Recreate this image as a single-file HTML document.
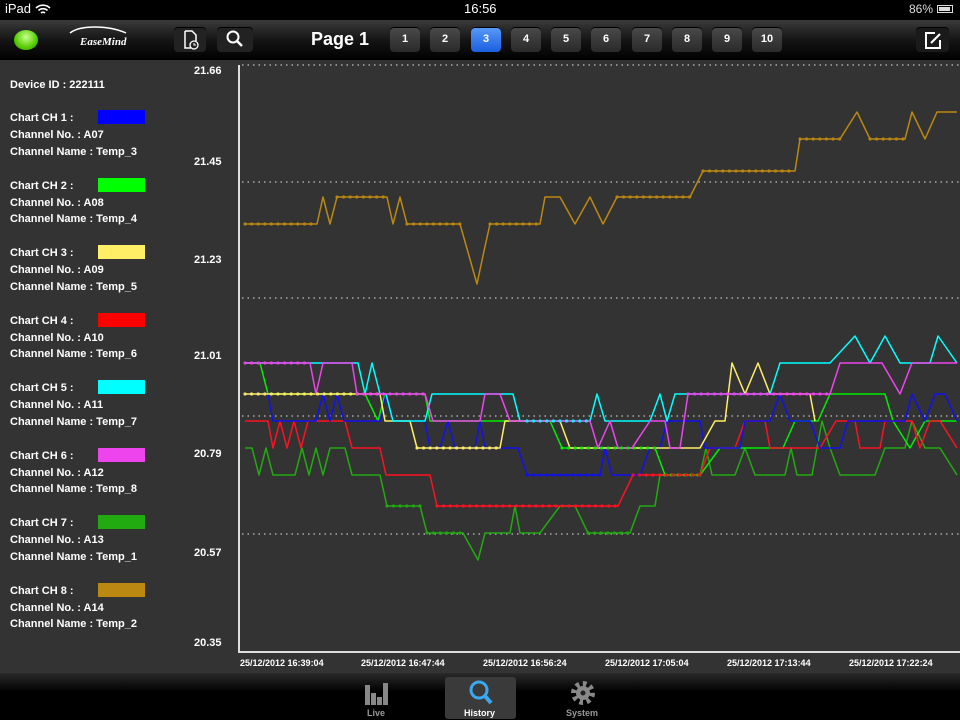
<!DOCTYPE html>
<html><head><meta charset="utf-8"><style>
body{margin:0;width:960px;height:720px;background:#333;overflow:hidden;font-family:"Liberation Sans",Arial,sans-serif;position:relative}
.sb{position:absolute;left:0;top:0;width:960px;height:20px;background:#000;color:#fff;font-size:13px}
.nav{position:absolute;left:0;top:20px;width:960px;height:40px;background:linear-gradient(#3a3a3a,#151515 50%,#000)}
.btn{position:absolute;top:7px;height:25px;width:30px;border-radius:4px;background:linear-gradient(#4a4a4a,#2a2a2a);color:#fff;font-size:11px;font-weight:bold;text-align:center;line-height:25px;box-shadow:0 1px 0 #000 inset}
.side{position:absolute;left:10px;color:#fff;font-size:11px;font-weight:bold}
.sw{position:absolute;left:98px;width:47px;height:14px}
.yl{position:absolute;left:194px;color:#fff;font-size:11px;font-weight:bold}
.tab{position:absolute;top:673px;width:960px;height:47px;background:linear-gradient(#2a2a2a,#000 40%)}
</style></head><body>
<div class="sb"><span style="position:absolute;left:5px;top:1px">iPad</span>
<svg style="position:absolute;left:35px;top:3px" width="16" height="12"><path d="M1 5a10 10 0 0 1 14 0M3.5 7.5a6.5 6.5 0 0 1 9 0M6 10a3 3 0 0 1 4 0" stroke="#fff" stroke-width="1.6" fill="none"/></svg>
<span style="position:absolute;left:464px;top:1px">16:56</span>
<span style="position:absolute;left:909px;top:2px;font-size:12px;color:#ddd">86%</span>
<div style="position:absolute;left:937px;top:5px;width:16px;height:8px;border:1px solid #ddd;box-sizing:border-box"><div style="margin:1px;width:11px;height:4px;background:#ddd"></div></div></div>
<div class="nav">
<div style="position:absolute;left:14px;top:10px;width:24px;height:20px;border-radius:50%;background:radial-gradient(circle at 50% 35%,#c8ff90,#5c0 60%,#380)"></div>
<div style="position:absolute;left:68px;top:8px;color:#fff;font:italic bold 11px 'Liberation Serif',serif"><svg width="60" height="12" style="position:absolute;left:0;top:-3px"><path d="M2 8C12 0 40 0 58 8" stroke="#fff" fill="none" stroke-width="1.5"/></svg><span style="position:absolute;left:12px;top:8px;white-space:nowrap">EaseMind</span></div>
<div class="btn" style="left:174px;width:32px;background:#222"><svg width="20" height="22" style="margin-top:2px"><path d="M5 2h7l4 4v6M5 2v17h6" stroke="#fff" stroke-width="1.5" fill="none"/><circle cx="14" cy="16" r="4" stroke="#fff" fill="none" stroke-width="1.3"/><path d="M14 14v2h2" stroke="#fff" fill="none"/></svg></div>
<div class="btn" style="left:217px;width:36px;background:#222"><svg width="20" height="20" style="margin-top:2px"><circle cx="8" cy="8" r="5.5" stroke="#fff" stroke-width="2" fill="none"/><path d="M12 12l5 5" stroke="#fff" stroke-width="2.5"/></svg></div>
<div style="position:absolute;left:311px;top:9px;color:#fff;font-size:18px;font-weight:bold">Page 1</div>
<div class="btn" style="left:390px">1</div><div class="btn" style="left:430px">2</div>
<div class="btn" style="left:471px;background:linear-gradient(#5a9af8,#1a5fe0)">3</div>
<div class="btn" style="left:511px">4</div><div class="btn" style="left:551px">5</div><div class="btn" style="left:591px">6</div><div class="btn" style="left:632px">7</div><div class="btn" style="left:672px">8</div><div class="btn" style="left:712px">9</div><div class="btn" style="left:752px">10</div>
<div class="btn" style="left:916px;width:33px;background:#1a1a1a"><svg width="22" height="22" style="margin-top:2px"><path d="M13 4H4v15h14v-8" stroke="#fff" stroke-width="2" fill="none"/><path d="M9 14l9-9" stroke="#fff" stroke-width="2"/></svg></div>
</div>

<div class="side" style="top:79px">Device ID : 222111</div>
<div class="side" style="top:112px">Chart CH 1 :</div><div class="sw" style="top:110px;background:#0000ff"></div>
<div class="side" style="top:129px">Channel No. : A07</div><div class="side" style="top:146px">Channel Name : Temp_3</div>
<div class="side" style="top:180px">Chart CH 2 :</div><div class="sw" style="top:178px;background:#00ff00"></div>
<div class="side" style="top:197px">Channel No. : A08</div><div class="side" style="top:213px">Channel Name : Temp_4</div>
<div class="side" style="top:247px">Chart CH 3 :</div><div class="sw" style="top:245px;background:#ffee66"></div>
<div class="side" style="top:264px">Channel No. : A09</div><div class="side" style="top:281px">Channel Name : Temp_5</div>
<div class="side" style="top:315px">Chart CH 4 :</div><div class="sw" style="top:313px;background:#ff0000"></div>
<div class="side" style="top:332px">Channel No. : A10</div><div class="side" style="top:348px">Channel Name : Temp_6</div>
<div class="side" style="top:382px">Chart CH 5 :</div><div class="sw" style="top:380px;background:#00ffff"></div>
<div class="side" style="top:399px">Channel No. : A11</div><div class="side" style="top:416px">Channel Name : Temp_7</div>
<div class="side" style="top:450px">Chart CH 6 :</div><div class="sw" style="top:448px;background:#ee44ee"></div>
<div class="side" style="top:467px">Channel No. : A12</div><div class="side" style="top:483px">Channel Name : Temp_8</div>
<div class="side" style="top:517px">Chart CH 7 :</div><div class="sw" style="top:515px;background:#22aa11"></div>
<div class="side" style="top:534px">Channel No. : A13</div><div class="side" style="top:551px">Channel Name : Temp_1</div>
<div class="side" style="top:585px">Chart CH 8 :</div><div class="sw" style="top:583px;background:#bb8811"></div>
<div class="side" style="top:602px">Channel No. : A14</div><div class="side" style="top:618px">Channel Name : Temp_2</div>

<div class="yl" style="top:65px">21.66</div><div class="yl" style="top:156px">21.45</div><div class="yl" style="top:254px">21.23</div><div class="yl" style="top:350px">21.01</div><div class="yl" style="top:448px">20.79</div><div class="yl" style="top:547px">20.57</div><div class="yl" style="top:637px">20.35</div>

<svg style="position:absolute;left:0;top:0" width="960" height="720">
<g stroke="#aaa" stroke-width="1.5" stroke-dasharray="1.5 4">
<path d="M242 65H960M242 182H960M242 298H960M242 416H960M242 534H960"/></g>
<path d="M239 65V652H960" stroke="#ddd" stroke-width="2" fill="none"/>
<g fill="none" stroke-width="1.5" stroke-linejoin="round">
<path stroke="#bb8811" d="M245 224H317L323 197L330 224L337 197H387L393 224L400 197L407 224H460L477 284L484 251L490 224H540L545 197H560L575 224L590 197L603 224L617 197H690L703 171H795L800 139H840L857 112L870 139H905L912 112L925 139L937 112H957"/>
<path stroke="#22aa11" d="M245 448L252 448L259 475L266 448L273 475H295L302 448L309 475L316 448L323 475L330 448H345L352 475H380L387 506H420L427 533H463L478 560L485 533H510L515 506L520 533H540L560 506H575L588 533H630L640 506H655L660 475H700L706 448L712 475H735L745 448L755 475H785L791 448L797 475H812L822 421L830 448L840 475H875L885 448H905L912 421L925 448H940L957 475"/>
<path stroke="#00ee00" d="M245 363H260L268 394H356L365 394L378 421L385 394L393 394L400 394L425 394L430 421H550L562 448H655L665 475H700L720 448H738L743 448L745 448H783L795 421L804 421H818L830 394H870L885 394L893 421L910 448L925 421H957"/>
<path stroke="#ff1122" d="M245 421H268L273 448L280 421L287 448L294 421L301 448L308 421H345L352 448H380L386 475H430L437 506H618L633 475H700L710 448H735L745 421H765L770 448H820L836 421H855L860 448H880L885 421H912L920 448L930 421H940L957 448"/>
<path stroke="#1111ee" d="M245 394H268L273 421H316L323 394L330 421L337 394L344 421H380L386 394L393 421H425L430 448H440L448 421L455 448H475L480 421L485 448H518L527 475H600L605 448L612 475H640L650 448H660L667 421H700L705 448H740L745 421H770L780 394H780L790 421H810L820 448H840L848 421H905L912 394L925 421L935 394H945L957 421"/>
<path stroke="#ffee66" d="M245 394H380L385 421H410L417 448H500L505 421H560L570 448H700L715 421H725L732 363L745 394L758 363L770 394H810L815 421"/>
<path stroke="#00ffff" d="M245 363H358L365 394L372 363L380 394L386 394L393 421H425L432 394H505L513 394L520 421L527 421H590L597 394L605 421H650L660 394L667 421L675 394H770L780 363H830L855 336L870 363L885 336L900 363H930L938 336L957 363"/>
<path stroke="#ee44ee" d="M245 363H310L316 394L323 363H352L357 394H425L433 421H480L485 394H500L510 421H590L598 448L610 421L618 448H632L650 421H665L670 448H680L688 394H830L840 363H882L900 394L912 363H957"/>
</g>
<g fill="none" stroke-width="3.2" stroke-linecap="round" stroke-dasharray="0 6.6" opacity=".9">
<path stroke="#bb8811" d="M245 224H317M337 197H387M407 224H460M490 224H540M617 197H690M703 171H795M800 139H840M870 139H905"/>
<path stroke="#22aa11" d="M387 506H420M427 533H463M588 533H630M660 475H700"/>
<path stroke="#00ee00" d="M562 448H655M665 475H700"/>
<path stroke="#ff1122" d="M437 506H618M633 475H700"/>
<path stroke="#1111ee" d="M527 475H600"/>
<path stroke="#ffee66" d="M245 394H380M417 448H500"/>
<path stroke="#ee44ee" d="M245 363H310M357 394H425M688 394H830"/>
<path stroke="#00ffff" d="M527 421H590"/>
</g>
<g fill="#fff" font-family="Liberation Sans,Arial,sans-serif" font-size="9" font-weight="bold">
<text x="240" y="666">25/12/2012 16:39:04</text><text x="361" y="666">25/12/2012 16:47:44</text><text x="483" y="666">25/12/2012 16:56:24</text><text x="605" y="666">25/12/2012 17:05:04</text><text x="727" y="666">25/12/2012 17:13:44</text><text x="849" y="666">25/12/2012 17:22:24</text></g>
</svg>

<div class="tab">
<div style="position:absolute;left:445px;top:4px;width:71px;height:42px;border-radius:3px;background:#3a3a3a"></div>
<svg style="position:absolute;left:362px;top:6px" width="30" height="28"><g fill="#888"><rect x="3" y="6" width="5" height="20"/><rect x="9" y="14" width="5" height="12"/><rect x="15" y="18" width="5" height="8"/><rect x="21" y="4" width="5" height="22"/></g></svg>
<svg style="position:absolute;left:466px;top:6px" width="30" height="28"><circle cx="13" cy="11" r="8" stroke="#3aa8f0" stroke-width="3" fill="none"/><path d="M19 17l6 7" stroke="#3aa8f0" stroke-width="4"/></svg>
<svg style="position:absolute;left:568px;top:6px" width="30" height="30"><circle cx="15" cy="14" r="9" fill="none" stroke="#888" stroke-width="6" stroke-dasharray="3.5 3.5"/><circle cx="15" cy="14" r="7" fill="#888"/><circle cx="15" cy="14" r="2.5" fill="#222"/></svg>
<div style="position:absolute;left:367px;top:35px;color:#999;font-size:9px;font-weight:bold">Live</div>
<div style="position:absolute;left:464px;top:35px;color:#fff;font-size:9px;font-weight:bold">History</div>
<div style="position:absolute;left:566px;top:35px;color:#999;font-size:9px;font-weight:bold">System</div>
</div>
</body></html>
